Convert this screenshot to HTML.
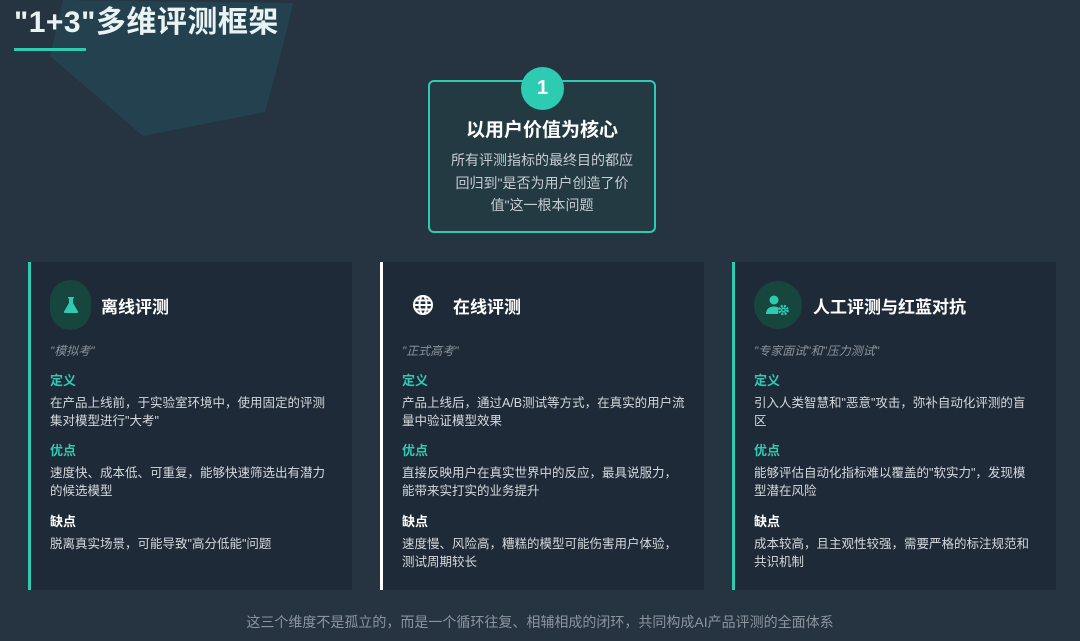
<!DOCTYPE html>
<html><head><meta charset="utf-8"><style>
*{margin:0;padding:0;box-sizing:border-box}
body{width:1080px;height:641px;background:#263341;font-family:"Liberation Sans","Noto Sans CJK SC",sans-serif;position:relative;overflow:hidden;color:#fff}
.abs{position:absolute}
h1{position:absolute;left:14px;top:3px;font-size:30px;line-height:40px;font-weight:bold;color:#e9f3f3;white-space:nowrap;letter-spacing:0.5px}
.ul{left:14px;top:48px;width:72px;height:3px;background:#2ecbb3}
.top{left:428px;top:80px;width:228px;height:153px;border:2px solid #2ecbb3;border-radius:6px;background:#233a42;text-align:center}
.num{left:521px;top:67px;width:43px;height:43px;border-radius:50%;background:#2ecbb3;color:#fff;font-weight:bold;font-size:20px;text-align:center;line-height:43px}
.top .t{margin-top:36px;font-size:19px;font-weight:bold;line-height:26px}
.top .b{margin-top:5px;font-size:14px;line-height:22.5px;color:#c6ccd2;padding:0 18px}
.card{top:262px;width:324px;height:328px;background:#1f2a38;border-left:3px solid #2ecbb3;padding-left:19px}
.ic{position:absolute;left:19px;top:18px;width:41px;height:50px;border-radius:21px;background:#17463f;display:flex;align-items:center;justify-content:center}
.ct{position:absolute;left:70px;top:31px;font-size:17px;font-weight:bold}
.q{position:absolute;left:19px;top:80px;font-size:12px;font-style:italic;color:#8a929b}
.sec{position:absolute;left:19px;width:282px}
.h{font-size:13px;font-weight:bold;color:#2ecbb3;line-height:18px}
.h.w{color:#fff}
.p{font-size:12.5px;line-height:18px;color:#d3d8dd;margin-top:4px}
.foot{left:0;width:1080px;top:612px;text-align:center;font-size:14px;color:#8b95a0}
</style></head><body>
<svg class="abs" style="left:0;top:0" width="400" height="150"><polygon points="63,0 293,3 285,38 265,112 143,136 50,56" fill="#244150"/></svg>
<h1>"1+3"多维评测框架</h1>
<div class="abs ul"></div>
<div class="abs top"><div class="t">以用户价值为核心</div><div class="b">所有评测指标的最终目的都应回归到"是否为用户创造了价值"这一根本问题</div></div>
<div class="abs num">1</div>

<div class="abs card" style="left:28px">
<div class="ic"><svg width="20" height="20" viewBox="0 0 20 20"><path d="M7 2h6v1.5h-1v4.5l5 8.5c.5 1-.2 1.5-1 1.5H4c-.8 0-1.5-.5-1-1.5l5-8.5V3.5H7z" fill="#2ecbb3"/></svg></div>
<div class="ct">离线评测</div>
<div class="q">"模拟考"</div>
<div class="sec" style="top:110px"><div class="h">定义</div><div class="p">在产品上线前，于实验室环境中，使用固定的评测集对模型进行"大考"</div></div>
<div class="sec" style="top:180px"><div class="h">优点</div><div class="p">速度快、成本低、可重复，能够快速筛选出有潜力的候选模型</div></div>
<div class="sec" style="top:251px"><div class="h w">缺点</div><div class="p">脱离真实场景，可能导致"高分低能"问题</div></div>
</div>

<div class="abs card" style="left:380px;border-left-color:#fff">
<div class="ic" style="background:none"><svg width="22" height="22" viewBox="0 0 22 22" fill="none" stroke="#fff" stroke-width="2"><circle cx="11" cy="11" r="9"/><ellipse cx="11" cy="11" rx="3.5" ry="9"/><path d="M2 11h18M3.5 6.5h15M3.5 15.5h15"/></svg></div>
<div class="ct">在线评测</div>
<div class="q">"正式高考"</div>
<div class="sec" style="top:110px;width:290px"><div class="h">定义</div><div class="p">产品上线后，通过A/B测试等方式，在真实的用户流量中验证模型效果</div></div>
<div class="sec" style="top:180px"><div class="h">优点</div><div class="p">直接反映用户在真实世界中的反应，最具说服力，能带来实打实的业务提升</div></div>
<div class="sec" style="top:251px"><div class="h w">缺点</div><div class="p">速度慢、风险高，糟糕的模型可能伤害用户体验，测试周期较长</div></div>
</div>

<div class="abs card" style="left:732px">
<div class="ic" style="width:48px;height:48px;border-radius:50%;top:19px"><svg width="26" height="22" viewBox="0 0 26 22"><circle cx="9" cy="6" r="4.5" fill="#2ecbb3"/><path d="M1 20c0-5 3.5-7.5 8-7.5 2 0 3.5.5 4.5 1.2L13 20z" fill="#2ecbb3"/><circle cx="18.5" cy="16" r="4" fill="none" stroke="#2ecbb3" stroke-width="2.6" stroke-dasharray="2 1.2"/><circle cx="18.5" cy="16" r="2.5" fill="#2ecbb3"/><circle cx="18.5" cy="16" r="1.1" fill="#17463f"/></svg></div>
<div class="ct" style="left:78px">人工评测与红蓝对抗</div>
<div class="q">"专家面试"和"压力测试"</div>
<div class="sec" style="top:110px"><div class="h">定义</div><div class="p">引入人类智慧和"恶意"攻击，弥补自动化评测的盲区</div></div>
<div class="sec" style="top:180px"><div class="h">优点</div><div class="p">能够评估自动化指标难以覆盖的"软实力"，发现模型潜在风险</div></div>
<div class="sec" style="top:251px"><div class="h w">缺点</div><div class="p">成本较高，且主观性较强，需要严格的标注规范和共识机制</div></div>
</div>

<div class="abs foot">这三个维度不是孤立的，而是一个循环往复、相辅相成的闭环，共同构成AI产品评测的全面体系</div>
</body></html>
